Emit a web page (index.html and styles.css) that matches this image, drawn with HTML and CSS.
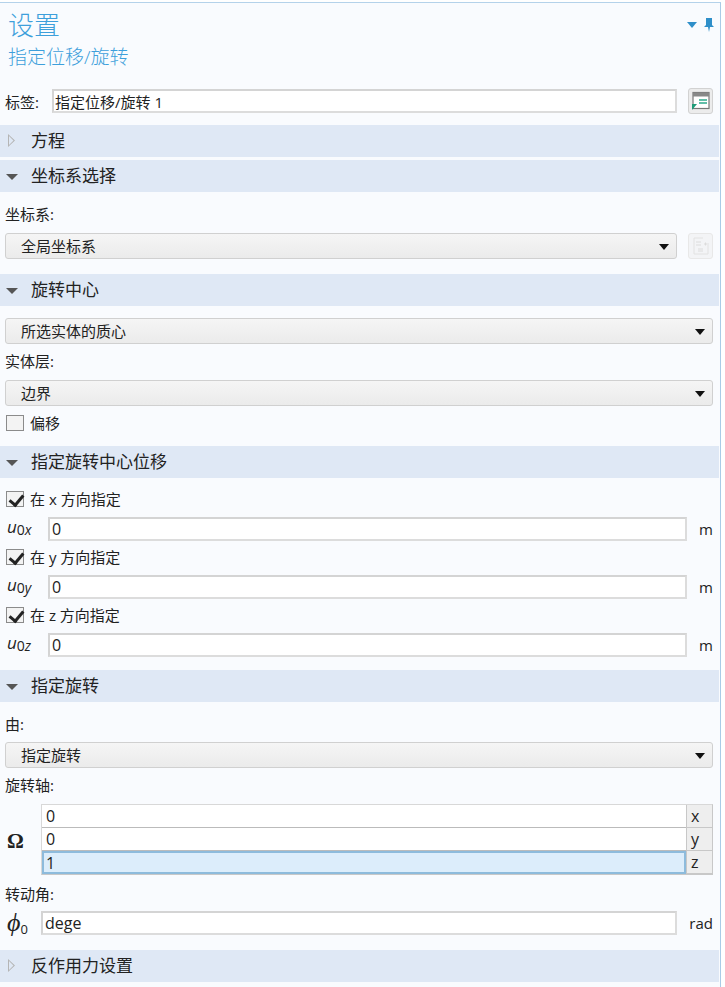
FILE: index.html
```html
<!DOCTYPE html>
<html lang="zh">

<head>
    <meta charset="utf-8">
    <title>设置</title>
    <link rel="stylesheet" href="styles.css">
</head>

<body>
    <div class="panel">
        <div class="head">
            <div>
                <h1 class="title">设置</h1>
                <h2 class="subtitle">指定位移/旋转</h2>
            </div>
            <div class="head-icons">
                <svg width="12" height="8" viewBox="0 0 12 8"><path d="M1 1h10L6 7z" fill="#2f8fc9"/></svg>
                <svg width="10" height="14" viewBox="0 0 10 14"><path d="M2 0h6v7l2 2H6l-1 5-1-5H0l2-2z" fill="#2f8fc9"/></svg>
            </div>
        </div>

        <div class="row label-row">
            <span class="label-name">标签:</span>
            <input class="field text-field grow" value="指定位移/旋转 1">
            <div class="icon-btn">
                <svg width="20" height="20" viewBox="0 0 20 20">
                    <rect x="2" y="1.5" width="16" height="16" fill="#fff" stroke="#777" stroke-width="1.2"/>
                    <rect x="2" y="1.5" width="16" height="4" fill="#888"/>
                    <path d="M8 9h8M8 12h8" stroke="#2fa98c" stroke-width="1.3"/>
                    <path d="M1 19v-6h5z" fill="#1f9c78"/>
                </svg>
            </div>
        </div>

        <div class="bar first"><span class="tri-open closed"></span>方程</div>
        <div class="bar near"><span class="tri-open"></span>坐标系选择</div>

        <div class="caption cap-coord">坐标系:</div>
        <div class="row select-row">
            <div class="select grow">全局坐标系<span class="caret"></span></div>
            <div class="icon-btn faded">
                <svg width="20" height="20" viewBox="0 0 20 20">
                    <path d="M12 2H3v16h14V7" fill="none" stroke="#e2e2e2"/>
                    <path d="M5 6h5M5 9h5M7 13h5M7 15h5M13 8h3M14.5 6.500v3" stroke="#dcdcdc"/>
                </svg>
            </div>
        </div>

        <div class="bar"><span class="tri-open"></span>旋转中心</div>
        <div class="select sel-top">所选实体的质心<span class="caret"></span></div>
        <div class="caption cap-tight">实体层:</div>
        <div class="select">边界<span class="caret"></span></div>
        <label class="check-row off-row"><span class="check"></span>偏移</label>

        <div class="bar bar-after-check"><span class="tri-open"></span>指定旋转中心位移</div>
        <label class="check-row first-check"><span class="check on"></span>在 x 方向指定</label>
        <div class="row coord-row">
            <span class="sym">u<sub>0<i>x</i></sub></span>
            <input class="field grow" value="0">
            <span class="unit">m</span>
        </div>
        <label class="check-row"><span class="check on"></span>在 y 方向指定</label>
        <div class="row coord-row">
            <span class="sym">u<sub>0<i>y</i></sub></span>
            <input class="field grow" value="0">
            <span class="unit">m</span>
        </div>
        <label class="check-row"><span class="check on"></span>在 z 方向指定</label>
        <div class="row coord-row">
            <span class="sym">u<sub>0<i>z</i></sub></span>
            <input class="field grow" value="0">
            <span class="unit">m</span>
        </div>

        <div class="bar bar-after-coord"><span class="tri-open"></span>指定旋转</div>
        <div class="caption cap-by">由:</div>
        <div class="select">指定旋转<span class="caret"></span></div>
        <div class="caption cap-tight">旋转轴:</div>
        <div class="axis-block">
            <span class="omega">Ω</span>
            <div class="axis-table">
                <div class="axis-row"><span class="axis-val">0</span><span class="axis-name">x</span></div>
                <div class="axis-row"><span class="axis-val">0</span><span class="axis-name">y</span></div>
                <div class="axis-row"><span class="axis-val active">1</span><span class="axis-name">z</span></div>
            </div>
        </div>
        <div class="caption cap-angle">转动角:</div>
        <div class="row angle-row">
            <span class="phi">ϕ<sub>0</sub></span>
            <input class="field grow" value="dege">
            <span class="unit">rad</span>
        </div>

        <div class="bar bar-last"><span class="tri-open closed"></span>反作用力设置</div>
    </div>
</body>

</html>
```

FILE: styles.css
```css
* {
    box-sizing: border-box;
}

body {
    margin: 0;
    background: #fff;
    font-family: "Open Sans", "Noto Sans CJK SC", sans-serif;
    font-size: 15px;
    color: #222;
}

.panel {
    width: 721px;
    height: 987px;
    margin-top: 2px;
    border-top: 1px solid #b4d2ea;
    border-right: 1px solid #a9cbe6;
    background: #f9fbfe;
    overflow: hidden;
}

.head {
    display: flex;
    justify-content: space-between;
    height: 85px;
}

.title {
    margin: 4px 0 0 8px;
    height: 36px;
    font-size: 26px;
    line-height: 36px;
    font-weight: 300;
    color: #3d9fdb;
}

.subtitle {
    margin: 1px 0 0 8px;
    font-size: 19px;
    line-height: 26px;
    font-weight: 300;
    color: #3d9fdb;
}

.head-icons {
    display: flex;
    align-items: center;
    gap: 6px;
    height: 14px;
    margin: 15px 6px 0 0;
}

.row {
    display: flex;
    align-items: center;
}

.grow {
    flex: 1;
    min-width: 0;
}

.label-row {
    height: 26px;
    padding: 0 7px 0 5px;
}

.label-name {
    width: 47px;
}

.field {
    height: 24px;
    padding: 0 2px;
    border: 2px solid #d4d4d4;
    border-right-color: #dcdcdc;
    border-bottom-color: #dcdcdc;
    background: #fff;
    font-family: "Open Sans", "Noto Sans CJK SC", sans-serif;
    font-size: 16px;
    color: #222;
    outline: none;
}

.text-field {
    padding: 0 1px;
    font-size: 15px;
}

.icon-btn {
    display: flex;
    align-items: center;
    justify-content: center;
    width: 25px;
    height: 26px;
    margin-left: 11px;
    border: 1px solid #d2d2d2;
    border-radius: 3px;
    background: #ececec;
}

.icon-btn.faded {
    border-color: #e8e8e8;
    background: #f3f4f6;
}

.bar {
    display: flex;
    align-items: center;
    width: 719px;
    height: 32px;
    margin-top: 15px;
    padding-left: 31px;
    padding-bottom: 3px;
    background: #dfe8f5;
    font-size: 17px;
    color: #222;
    position: relative;
}

.bar.first {
    margin-top: 11px;
}

.bar.near {
    margin-top: 3px;
}

.tri-open {
    position: absolute;
    left: 6px;
    top: 14px;
    border-left: 6px solid transparent;
    border-right: 6px solid transparent;
    border-top: 6px solid #555;
}

.tri-open.closed {
    left: 8px;
    top: 9px;
    width: 7px;
    height: 13px;
    border: 0;
    background: #b5b5b5;
    clip-path: polygon(0 0, 100% 50%, 0 100%, 0 0, 1px 2px, 1px 11px, 5.5px 6.5px, 1px 2px);
}

.caption {
    padding-left: 5px;
    font-size: 15px;
    line-height: 18px;
}

.cap-coord {
    margin-top: 13px;
    margin-bottom: 10px;
}

.cap-by {
    margin-top: 13px;
    margin-bottom: 9px;
}

.cap-tight {
    margin-top: 8px;
    margin-bottom: 10px;
}

.cap-angle {
    margin-top: 10px;
    margin-bottom: 8px;
}

.select-row {
    padding-right: 7px;
}

.select {
    position: relative;
    height: 26px;
    margin-left: 5px;
    margin-right: 7px;
    padding-left: 15px;
    border: 1px solid #d0d0d0;
    border-radius: 3px;
    background: linear-gradient(#f5f5f5, #ebebeb);
    font-size: 15px;
    line-height: 24px;
}

.row > .select {
    margin-right: 0;
}

.sel-top {
    margin-top: 12px;
}

.caret {
    position: absolute;
    right: 7px;
    top: 10px;
    border-left: 5px solid transparent;
    border-right: 5px solid transparent;
    border-top: 6px solid #111;
}

.check-row {
    display: flex;
    align-items: center;
    height: 16px;
    padding-left: 6px;
    font-size: 15px;
    line-height: 16px;
}

.off-row {
    margin-top: 9px;
}

.first-check {
    margin-top: 13px;
}

.bar-after-check {
    margin-top: 15px;
}

.bar-after-coord {
    margin-top: 13px;
}

.bar-last {
    margin-top: 15px;
}

.check {
    position: relative;
    width: 18px;
    height: 16px;
    margin-right: 6px;
    border: 1px solid #8b8b8b;
    background: #f3f3f3;
}

.check.on::after {
    content: "";
    position: absolute;
    left: 5px;
    top: 0;
    width: 6px;
    height: 11px;
    border-right: 3px solid #222;
    border-bottom: 3px solid #222;
    transform: rotate(40deg);
}

.coord-row {
    height: 24px;
    margin: 10px 0 8px;
    padding-right: 7px;
    padding-left: 7px;
}

.sym {
    width: 41px;
    padding-bottom: 5px;
    font-family: "Open Sans", sans-serif;
    font-style: italic;
    font-size: 17px;
    line-height: 20px;
    color: #222;
}

.sym sub {
    font-style: normal;
    font-size: 14px;
    line-height: 0;
    vertical-align: -2px;
}

.unit {
    margin-left: 12px;
    font-family: "Open Sans", sans-serif;
    font-size: 15px;
}

.axis-block {
    display: flex;
    align-items: center;
    height: 71px;
    margin-right: 7px;
    padding-left: 7px;
}

.omega {
    width: 34px;
    padding-top: 3px;
    font-family: "Liberation Serif", serif;
    font-weight: bold;
    font-size: 21px;
}

.axis-table {
    flex: 1;
    height: 71px;
    border-top: 1px solid #d8d8d8;
    border-right: 1px solid #c8c8c8;
    border-bottom: 1px solid #c8c8c8;
    border-left: 1px solid #d8d8d8;
}

.axis-row {
    display: flex;
    height: 23px;
}

.axis-val {
    flex: 1;
    padding-left: 4px;
    border-bottom: 1px solid #bbb;
    background: #fff;
    font-family: "Open Sans", sans-serif;
    font-size: 16px;
    line-height: 23px;
}

.axis-val.active {
    border: 2px solid #8dbbdc;
    padding-left: 2px;
    line-height: 20px;
    background: #dcedfb;
}

.axis-name {
    width: 26px;
    padding-left: 4px;
    border-left: 1px solid #c8c8c8;
    border-bottom: 1px solid #c8c8c8;
    background: #eeeeee;
    font-family: "Open Sans", sans-serif;
    font-size: 16px;
    line-height: 22px;
}

.angle-row {
    height: 24px;
    padding-right: 7px;
    padding-left: 7px;
}

.phi {
    width: 34px;
    font-family: "Liberation Serif", serif;
    font-style: italic;
    font-size: 26px;
    line-height: 20px;
}

.phi sub {
    font-family: "Open Sans", sans-serif;
    font-style: normal;
    font-size: 13px;
    line-height: 0;
    vertical-align: -3px;
}
```
